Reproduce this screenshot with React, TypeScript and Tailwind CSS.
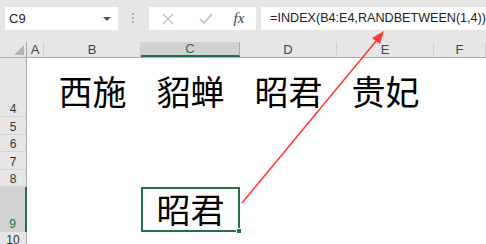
import React from "react";

const COLS = [
  { key: "A", w: 17 },
  { key: "B", w: 97 },
  { key: "C", w: 99, active: true },
  { key: "D", w: 97 },
  { key: "E", w: 97 },
  { key: "F", w: 52 },
];

const ROWS = [
  { n: 4, h: 59 },
  { n: 5, h: 18 },
  { n: 6, h: 17 },
  { n: 7, h: 18 },
  { n: 8, h: 17 },
  { n: 9, h: 45, active: true },
  { n: 10, h: 12 },
];

const NAMES: Record<string, string> = { B: "西施", C: "貂蝉", D: "昭君", E: "贵妃" };

const cjk = { fontFamily: '"Noto Sans CJK SC", "Noto Sans", sans-serif' };

export default function App() {
  return (
    <div
      className="relative w-[486px] h-[244px] overflow-hidden bg-white"
      style={{ fontFamily: '"Liberation Sans", Arial, sans-serif' }}
    >
      {/* formula bar */}
      <div className="flex h-[42px] items-start bg-[#e6e6e6] pt-[7px]">
        <div className="ml-[5px] flex h-[23px] w-[113px] items-center justify-between bg-white pl-[4px] pr-[7px] text-[13px] text-[#222]">
          <span>C9</span>
          <span className="h-0 w-0 border-x-[4px] border-t-[4px] border-x-transparent border-t-[#555]" />
        </div>
        <div className="flex w-[31px] flex-col items-center justify-center gap-[2px] pt-[6px]">
          <span className="h-[2px] w-[2px] bg-[#aaa]" />
          <span className="h-[2px] w-[2px] bg-[#aaa]" />
          <span className="h-[2px] w-[2px] bg-[#aaa]" />
        </div>
        <div className="flex h-[23px] w-[108px] items-center bg-white">
          <svg width="12" height="12" viewBox="0 0 12 12" className="ml-[13px]">
            <path d="M1 1L11 11M11 1L1 11" stroke="#bdbdbd" strokeWidth="1.3" fill="none" />
          </svg>
          <svg width="14" height="11" viewBox="0 0 14 11" className="ml-[25px]">
            <path d="M1 6L5 10L13 1" stroke="#bdbdbd" strokeWidth="1.6" fill="none" />
          </svg>
          <span
            className="ml-[21px] text-[15px] italic text-[#444]"
            style={{ fontFamily: '"Liberation Serif", serif' }}
          >
            fx
          </span>
        </div>
        <div className="ml-[5px] flex h-[23px] flex-1 items-center bg-white pl-[9px] text-[12.6px] text-[#222]">
          =INDEX(B4:E4,RANDBETWEEN(1,4))
        </div>
      </div>

      {/* column headers */}
      <div className="flex h-[16px] border-b border-[#ababab] bg-[#e6e6e6]">
        <div className="relative w-[27px] border-r border-[#ababab]">
          <span className="absolute bottom-[2px] right-[2px] h-0 w-0 border-b-[10px] border-l-[10px] border-l-transparent border-b-[#b4b4b4]" />
        </div>
        {COLS.map((c) => (
          <div
            key={c.key}
            style={{ width: c.w }}
            className={
              c.active
                ? "flex shrink-0 items-center justify-center border-r border-[#ababab] border-b-2 border-b-[#217346] bg-[#d2d2d2] text-[13px] leading-none text-[#217346]"
                : "flex shrink-0 items-center justify-center border-r border-[#d0d0d0] text-[13px] leading-none text-[#444]"
            }
          >
            {c.key}
          </div>
        ))}
      </div>

      {/* rows */}
      {ROWS.map((r) => (
        <div key={r.n} className="flex" style={{ height: r.h }}>
          <div
            className={
              r.active
                ? "flex w-[27px] shrink-0 items-end justify-center border-r-2 border-r-[#217346] bg-[#d2d2d2] pb-[2px] text-[12px] leading-none text-[#217346]"
                : r.n === 10
                  ? "flex w-[27px] shrink-0 items-start justify-center overflow-hidden border-r border-r-[#ababab] bg-[#e6e6e6] pt-[2px] text-[12px] leading-none text-[#333]"
                  : "flex w-[27px] shrink-0 items-end justify-center border-b border-[#d4d4d4] border-r border-r-[#ababab] bg-[#e6e6e6] pb-[1px] text-[12px] leading-none text-[#333]"
            }
          >
            {r.n}
          </div>
          {COLS.map((c) => {
            const selected = r.n === 9 && c.key === "C";
            const text = r.n === 4 ? NAMES[c.key] : selected ? "昭君" : "";
            return (
              <div
                key={c.key}
                style={{ width: c.w, ...cjk }}
                className={
                  selected
                    ? "relative flex shrink-0 items-end justify-center border-2 border-[#217346] pb-[1px] text-[34px] leading-[40px] text-black"
                    : "flex shrink-0 items-end justify-center pb-[6px] text-[34px] leading-[40px] text-black"
                }
              >
                {text}
                {selected && (
                  <span className="absolute -bottom-[4px] -right-[4px] h-[6px] w-[6px] border border-white bg-[#217346]" />
                )}
              </div>
            );
          })}
        </div>
      ))}

      {/* annotation arrow */}
      <svg className="pointer-events-none absolute left-0 top-0" width="486" height="244">
        <line x1="242" y1="203" x2="377" y2="40" stroke="#ff3b3b" strokeWidth="1.6" />
        <polygon points="384,31 372,38 380,44" fill="#ff3b3b" />
      </svg>
    </div>
  );
}
